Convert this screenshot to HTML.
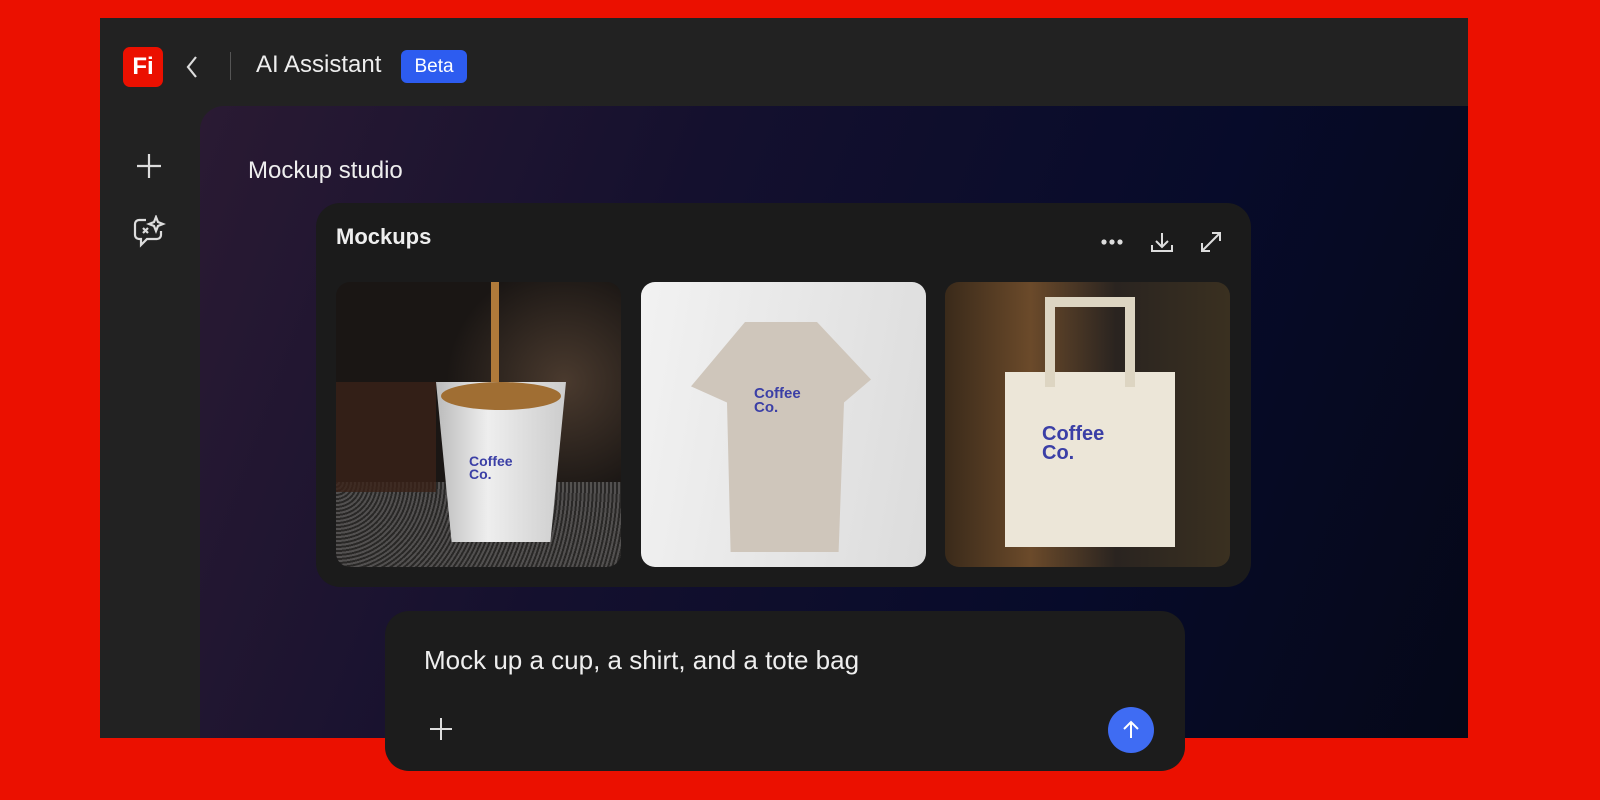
<!DOCTYPE html><html><head><style>
*{margin:0;padding:0;box-sizing:border-box}
body{width:1600px;height:800px;background:#eb1000;position:relative;overflow:hidden;font-family:"Liberation Sans",sans-serif;color:#eee}
.frame{position:absolute;left:100px;top:18px;width:1368px;height:720px;background:#222}
.main{position:absolute;left:200px;top:106px;width:1268px;height:632px;border-top-left-radius:24px;background:linear-gradient(110deg,#2a1a33 0%,#14102e 35%,#070b2a 70%,#050818 100%)}
.card{position:absolute;left:316px;top:203px;width:935px;height:384px;background:#1b1b1b;border-radius:24px}
.img{position:absolute;top:282px;width:285px;height:285px;border-radius:14px;overflow:hidden}
.logo{position:absolute;color:#3b3fa6;font-weight:bold;line-height:0.95;font-family:"Liberation Sans",sans-serif}
.input{position:absolute;left:385px;top:611px;width:800px;height:160px;background:#1c1c1c;border-radius:24px}
</style></head><body>
<div class="frame"></div>
<div style="position:absolute;left:123px;top:47px;width:40px;height:40px;background:#eb1000;border-radius:7px;color:#fff;font-weight:bold;font-size:24px;line-height:40px;text-align:center">Fi</div>
<svg style="position:absolute;left:183px;top:54px" width="20" height="26"><path d="M13 3L5 13L13 23" stroke="#ddd" stroke-width="2.2" fill="none"/></svg>
<div style="position:absolute;left:230px;top:52px;width:1px;height:28px;background:#555"></div>
<div style="position:absolute;left:256px;top:51px;font-size:24px;color:#eee">AI Assistant</div>
<div style="position:absolute;left:401px;top:50px;width:66px;height:33px;background:#2d5cf0;border-radius:6px;font-size:19px;color:#fff;text-align:center;line-height:33px">Beta</div>
<svg style="position:absolute;left:135px;top:152px" width="28" height="28"><path d="M14 2V26M2 14H26" stroke="#ddd" stroke-width="2.2"/></svg>
<svg style="position:absolute;left:132px;top:215px" width="34" height="34" fill="none" stroke="#ddd" stroke-width="2.2"><path d="M14 5H7a4 4 0 0 0-4 4v11a4 4 0 0 0 4 4h2v6l6-6h10a4 4 0 0 0 4-4v-4"/><path d="M24 2l2 5 5 2-5 2-2 5-2-5-5-2 5-2z"/><path d="M11 13l5 5M16 13l-5 5"/></svg>
<div class="main"></div>
<div style="position:absolute;left:248px;top:157px;font-size:24px;color:#eee">Mockup studio</div>
<div class="card"></div>
<div style="position:absolute;left:336px;top:224px;font-size:22px;font-weight:bold;color:#eee">Mockups</div>
<svg style="position:absolute;left:1100px;top:232px" width="130" height="24" fill="none" stroke="#ddd" stroke-width="2"><circle cx="4" cy="10" r="1.6" fill="#ddd"/><circle cx="12" cy="10" r="1.6" fill="#ddd"/><circle cx="20" cy="10" r="1.6" fill="#ddd"/><path d="M62 1V15M56 9l6 6 6-6M52 13v6h20v-6"/><path d="M102 19l18-18M112 1h8v8M102 11v8h8"/></svg>
<div class="img" style="left:336px;background:radial-gradient(circle at 80% 35%,#4a3a2e 0,#1a1614 40%),linear-gradient(#222,#111)">
<div style="position:absolute;left:0;top:200px;width:285px;height:85px;background:repeating-radial-gradient(circle at 0 0,#333 0 2px,#777 2px 4px);opacity:.6"></div>
<div style="position:absolute;left:0;top:100px;width:100px;height:110px;background:#3a2218;opacity:.8"></div>
<div style="position:absolute;left:155px;top:0;width:8px;height:110px;background:#b07a3a"></div>
<div style="position:absolute;left:100px;top:100px;width:130px;height:160px;background:linear-gradient(90deg,#bbb,#eee 40%,#ccc);clip-path:polygon(0 0,100% 0,88% 100%,12% 100%)"></div>
<div style="position:absolute;left:105px;top:100px;width:120px;height:28px;background:#a06e33;border-radius:50%"></div>
<div class="logo" style="left:133px;top:173px;font-size:14px">Coffee<br>Co.</div>
</div>
<div class="img" style="left:641px;background:linear-gradient(100deg,#f2f2f2,#dcdcdc)">
<div style="position:absolute;left:50px;top:40px;width:180px;height:230px;background:#cfc6bb;clip-path:polygon(30% 0,70% 0,100% 25%,85% 35%,82% 100%,22% 100%,20% 35%,0 28%)"></div>
<div class="logo" style="left:113px;top:105px;font-size:15px">Coffee<br>Co.</div>
</div>
<div class="img" style="left:945px;background:linear-gradient(90deg,#3a2a1a,#6b4a2a 30%,#2a2420 60%,#3a3020)">
<div style="position:absolute;left:60px;top:90px;width:170px;height:175px;background:#ece6d8"></div>
<div style="position:absolute;left:100px;top:15px;width:90px;height:90px;border:10px solid #ddd5c2;border-bottom:none"></div>
<div class="logo" style="left:97px;top:143px;font-size:20px">Coffee<br>Co.</div>
</div>
<div class="input"></div>
<div style="position:absolute;left:424px;top:645px;font-size:26px;color:#eee">Mock up a cup, a shirt, and a tote bag</div>
<svg style="position:absolute;left:429px;top:717px" width="24" height="24"><path d="M12 1V23M1 12H23" stroke="#ddd" stroke-width="2"/></svg>
<div style="position:absolute;left:1108px;top:707px;width:46px;height:46px;border-radius:50%;background:#3f6cf3"></div>
<svg style="position:absolute;left:1119px;top:718px" width="24" height="24" fill="none" stroke="#fff" stroke-width="2"><path d="M12 20V4M5 11l7-7 7 7"/></svg>
</body></html>
